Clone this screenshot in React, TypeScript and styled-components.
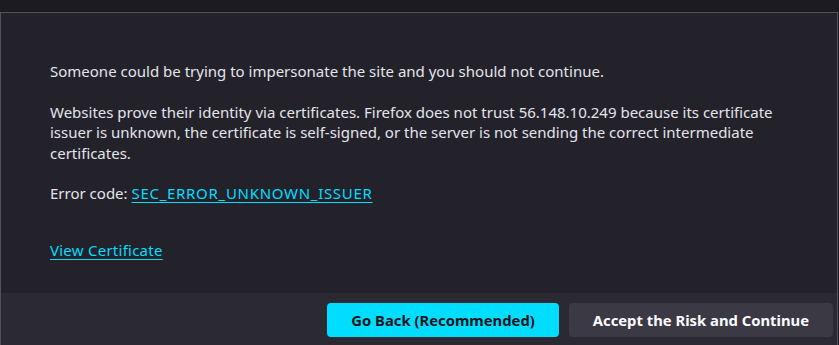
import React from 'react';
import styled, { createGlobalStyle } from 'styled-components';

const GlobalStyle = createGlobalStyle`
  html, body {
    margin: 0;
    padding: 0;
    background: #1c1b22;
    overflow: hidden;
  }
  body {
    font-family: "Noto Sans", "Open Sans", sans-serif;
  }
`;

const Page = styled.div`
  width: 839px;
  height: 345px;
  display: flex;
  flex-direction: column;
  background: #1c1b22;
`;

const TopStrip = styled.div`
  height: 12px;
  flex-shrink: 0;
`;

const Panel = styled.div`
  flex: 1;
  width: 838px;
  box-sizing: border-box;
  border: 1px solid #52525e;
  border-bottom: none;
  display: flex;
  flex-direction: column;
  background: #23222b;
`;

const Body = styled.div`
  height: 280px;
  box-sizing: border-box;
  padding: 48px 49px 0;
  color: #e4e4ea;
  font-size: 15px;
  line-height: 20.5px;
`;

const Para = styled.p<{ gap?: number }>`
  margin: 0 0 ${(p) => p.gap ?? 20}px;
`;

const LinkText = styled.a<{ spacing?: number }>`
  color: #00ddff;
  text-decoration: underline;
  text-underline-offset: 3px;
  letter-spacing: ${(p) => p.spacing ?? 0}px;
  cursor: pointer;
`;

const Footer = styled.div`
  flex: 1;
  background: #2b2a33;
  display: flex;
  justify-content: flex-end;
  align-items: flex-start;
  gap: 10px;
  padding: 10px 4px 0 0;
`;

const Button = styled.button<{ primary?: boolean }>`
  height: 34px;
  padding: 0 24px;
  border: none;
  border-radius: 4px;
  font-family: "Noto Sans", "Open Sans", sans-serif;
  font-weight: 700;
  font-size: 14.8px;
  background: ${(p) => (p.primary ? '#00ddff' : '#3a3944')};
  color: ${(p) => (p.primary ? '#15141a' : '#fbfbfe')};
  cursor: pointer;
`;

const App = () => {
  return (
    <>
      <GlobalStyle />
      <Page>
        <TopStrip />
        <Panel>
          <Body>
            <Para>Someone could be trying to impersonate the site and you should not continue.</Para>
            <Para>
              Websites prove their identity via certificates. Firefox does not trust 56.148.10.249 because its
              certificate issuer is unknown, the certificate is self-signed, or the server is not sending the correct
              intermediate certificates.
            </Para>
            <Para gap={36}>
              Error code: <LinkText spacing={0.7}>SEC_ERROR_UNKNOWN_ISSUER</LinkText>
            </Para>
            <Para>
              <LinkText spacing={0.25}>View Certificate</LinkText>
            </Para>
          </Body>
          <Footer>
            <Button primary>Go Back (Recommended)</Button>
            <Button>Accept the Risk and Continue</Button>
          </Footer>
        </Panel>
      </Page>
    </>
  );
};

export default App;
